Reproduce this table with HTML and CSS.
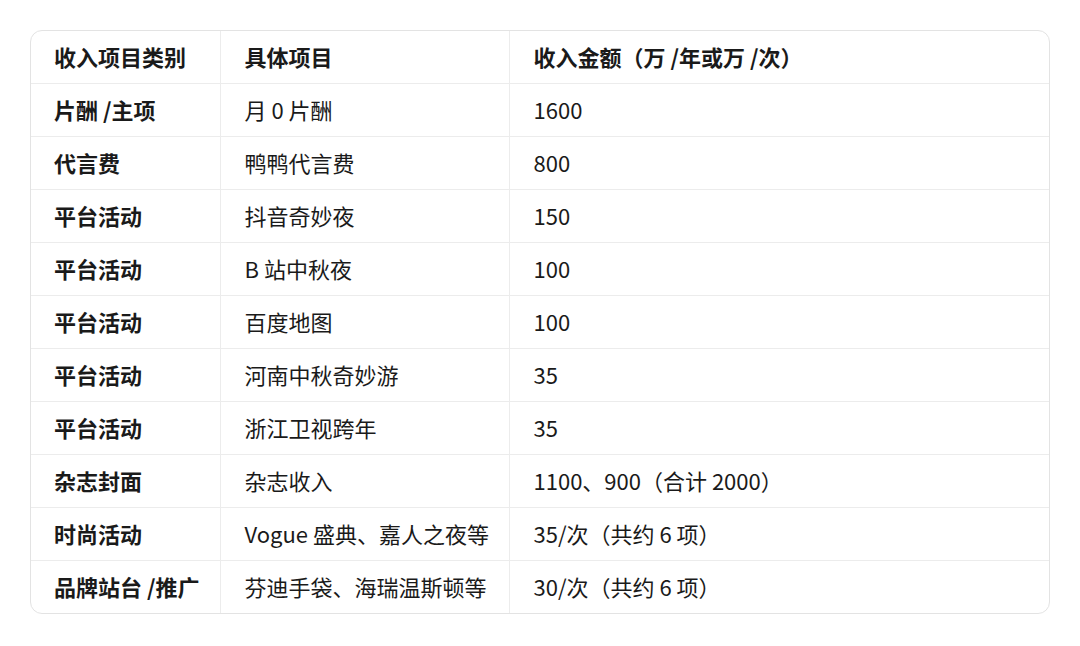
FILE: index.html
```html
<!DOCTYPE html>
<html lang="zh-CN">
<head>
<meta charset="utf-8">
<link rel="stylesheet" href="styles.css">
</head>
<body>
<div class="wrap">
<table class="tbl">
<colgroup><col class="c1"><col class="c2"><col class="c3"></colgroup>
<thead>
<tr><th>收入项目类别</th><th>具体项目</th><th>收入金额（万 /年或万 /次）</th></tr>
</thead>
<tbody>
<tr><td class="k">片酬 /主项</td><td>月 0 片酬</td><td>1600</td></tr>
<tr><td class="k">代言费</td><td>鸭鸭代言费</td><td>800</td></tr>
<tr><td class="k">平台活动</td><td>抖音奇妙夜</td><td>150</td></tr>
<tr><td class="k">平台活动</td><td>B 站中秋夜</td><td>100</td></tr>
<tr><td class="k">平台活动</td><td>百度地图</td><td>100</td></tr>
<tr><td class="k">平台活动</td><td>河南中秋奇妙游</td><td>35</td></tr>
<tr><td class="k">平台活动</td><td>浙江卫视跨年</td><td>35</td></tr>
<tr><td class="k">杂志封面</td><td>杂志收入</td><td>1100、900（合计 2000）</td></tr>
<tr><td class="k">时尚活动</td><td>Vogue 盛典、嘉人之夜等</td><td>35/次（共约 6 项）</td></tr>
<tr><td class="k">品牌站台 /推广</td><td>芬迪手袋、海瑞温斯顿等</td><td>30/次（共约 6 项）</td></tr>
</tbody>
</table>
</div>
</body>
</html>
```
FILE: styles.css
```css
html, body {
  margin: 0;
  padding: 0;
  background: #ffffff;
}
body {
  padding: 30px 30px 0 30px;
  font-family: "Noto Sans CJK SC", "Noto Sans", sans-serif;
  color: #1a1a1a;
}
.wrap {
  width: 1018px;
  border: 1px solid #e3e3e3;
  border-radius: 12px;
  overflow: hidden;
}
.tbl {
  width: 100%;
  border-collapse: collapse;
  table-layout: fixed;
  font-size: 22px;
}
.c1 { width: 189px; }
.c2 { width: 289px; }
.c3 { width: auto; }
.tbl th, .tbl td {
  height: 50px;
  padding: 0 0 2px 24px;
  text-align: left;
  vertical-align: middle;
  border-right: 1px solid #ececec;
  border-bottom: 1px solid #ececec;
  line-height: 24px;
  white-space: nowrap;
}
.tbl th:first-child, .tbl td:first-child { padding-left: 23px; }
.tbl th:last-child, .tbl td:last-child { border-right: none; }
.tbl tbody tr:last-child td { border-bottom: none; }
.tbl th { font-weight: 700; }
.tbl td { font-weight: 400; }
.tbl td.k { font-weight: 700; }
```
